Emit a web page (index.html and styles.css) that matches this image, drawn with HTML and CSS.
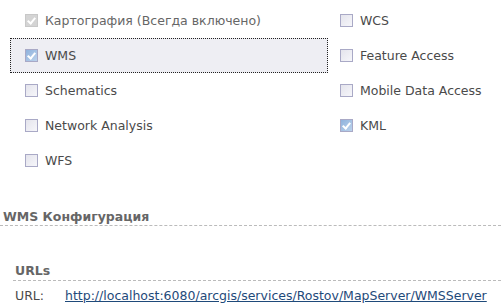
FILE: index.html
```html
<!DOCTYPE html>
<html lang="ru">
<head>
  <meta charset="UTF-8" />
  <title>Возможности сервиса</title>
  <link rel="stylesheet" href="styles.css">
</head>
<body>
  <div class="caps">
    <div class="col">
      <label class="cap disabled"><span class="cb checked"></span>Картография (Всегда включено)</label>
      <label class="cap focus"><span class="cb checked"></span>WMS</label>
      <label class="cap"><span class="cb"></span>Schematics</label>
      <label class="cap"><span class="cb"></span>Network Analysis</label>
      <label class="cap"><span class="cb"></span>WFS</label>
    </div>
    <div class="col right">
      <label class="cap"><span class="cb"></span>WCS</label>
      <label class="cap"><span class="cb"></span>Feature Access</label>
      <label class="cap"><span class="cb"></span>Mobile Data Access</label>
      <label class="cap"><span class="cb checked"></span>KML</label>
    </div>
  </div>

  <h2 class="section">WMS Конфигурация</h2>

  <div class="sub">
    <h3 class="subhead">URLs</h3>
    <div class="url-row">
      <span class="url-label">URL:</span>
      <a href="#" class="url-link">http://localhost:6080/arcgis/services/Rostov/MapServer/WMSServer</a>
    </div>
  </div>
</body>
</html>
```
FILE: styles.css
```css
body {
  margin: 0;
  font-family: 'DejaVu Sans', Verdana, sans-serif;
  font-size: 12.5px;
  line-height: 15px;
  color: #4a4a4a;
  background: #fff;
  overflow: hidden;
}
.caps {
  display: flex;
  padding: 3px 0 0 10px;
}
.col {
  display: flex;
  flex-direction: column;
  width: 320px;
}
.col.right {
  width: auto;
}
.cap {
  display: flex;
  align-items: center;
  height: 33px;
  border: 1px dotted transparent;
  padding-left: 14px;
  box-sizing: content-box;
}
.col.right .cap {
  padding-left: 9px;
}
.cap.focus {
  border-color: #222;
  background-color: #eeeef3;
  width: 302px;
}
.cap.disabled {
  color: #666;
}
.cb {
  width: 11px;
  height: 11px;
  border: 1px solid #a9a9c6;
  background: linear-gradient(135deg, #e4e4ec, #f6f6fa);
  margin-right: 7px;
  position: relative;
  flex: none;
}
.cb.checked {
  background: linear-gradient(135deg, #8fb2dc, #bcd3ec);
}
.cb.checked::after {
  content: "";
  position: absolute;
  left: 3px;
  top: 1px;
  width: 3px;
  height: 6px;
  border: solid #fff;
  border-width: 0 2px 2px 0;
  transform: rotate(40deg);
}
.disabled .cb {
  border-color: #c8c8c8;
  background: #d4d4d4;
}
.section {
  margin: 31px 0 0 0;
  padding: 0 0 1px 3px;
  font-size: 12.5px;
  line-height: 15px;
  font-weight: bold;
  color: #666;
  border-bottom: 1px dashed #bbb;
}
.sub {
  margin: 37px 0 0 13px;
}
.subhead {
  margin: 0;
  padding: 0 0 2px 2px;
  font-size: 12.5px;
  line-height: 15px;
  font-weight: bold;
  color: #666;
  border-bottom: 1px dashed #bbb;
}
.url-row {
  display: flex;
  padding: 7px 0 0 2px;
}
.url-label {
  width: 50px;
}
.url-link {
  color: #1f4a7a;
  text-decoration: underline;
}
```
